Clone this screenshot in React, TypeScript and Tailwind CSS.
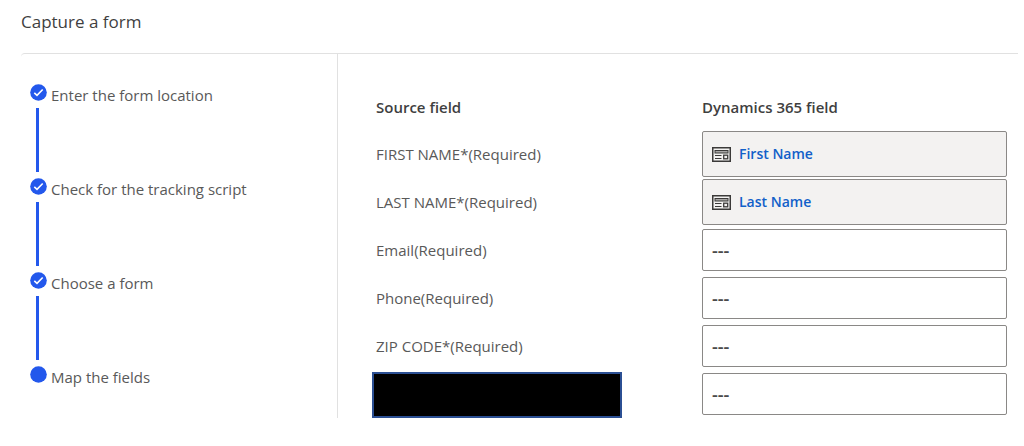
import React, { useState } from "react";

type Step = { label: string; done: boolean };

type FieldRow = {
  id: string;
  source: string | null;
  target: string | null;
};

const steps: Step[] = [
  { label: "Enter the form location", done: true },
  { label: "Check for the tracking script", done: true },
  { label: "Choose a form", done: true },
  { label: "Map the fields", done: false },
];

const rows: FieldRow[] = [
  { id: "first-name", source: "FIRST NAME*(Required)", target: "First Name" },
  { id: "last-name", source: "LAST NAME*(Required)", target: "Last Name" },
  { id: "email", source: "Email(Required)", target: null },
  { id: "phone", source: "Phone(Required)", target: null },
  { id: "zip", source: "ZIP CODE*(Required)", target: null },
  { id: "hidden", source: null, target: null },
];

function StepDot({ done }: { done: boolean }) {
  return (
    <svg className="h-[17px] w-[17px] shrink-0" viewBox="0 0 17 17" fill="none" aria-hidden="true">
      <circle cx="8.5" cy="8.5" r="8.3" fill="#2358ec" />
      {done && <path d="M4.3 8.9l2.7 2.5 5.7-5.9" stroke="#fff" strokeWidth="1.6" />}
    </svg>
  );
}

function FieldIcon() {
  return (
    <svg className="h-[15px] w-[19px] shrink-0" viewBox="0 0 19 15" fill="none" stroke="#3b3a39" aria-hidden="true">
      <rect x="0.75" y="0.75" width="17.5" height="13.5" strokeWidth="1.5" />
      <rect x="3" y="3.5" width="13" height="2.5" fill="#a8a7a6" />
      <path d="M3 8.5h6.5M3 11.5h6.5" strokeWidth="1.2" />
      <rect x="11.7" y="8.2" width="4" height="3.6" strokeWidth="1.3" />
    </svg>
  );
}

function Steps() {
  return (
    <ol className="w-[317px] shrink-0 border-r border-[#e1e1e1] pt-[30px] pl-[9px]">
      {steps.map((step, i) => (
        <li key={step.label} className={i < steps.length - 1 ? "h-[94px]" : ""}>
          <div className="flex items-start gap-1">
            <StepDot done={step.done} />
            <span className="text-[15px] leading-[22px] text-[#595959]">{step.label}</span>
          </div>
          {i < steps.length - 1 && <div className="mt-[2px] ml-[6px] h-16 w-[3px] bg-[#2358ec]" />}
        </li>
      ))}
    </ol>
  );
}

function MappingTable() {
  const [values, setValues] = useState<Record<string, string>>({});

  return (
    <table className="w-full table-fixed">
      <thead>
        <tr className="h-[46px] align-top text-left text-[15px] leading-[20px] text-[#3f3f3f]">
          <th className="w-[326px] pt-[13px] font-semibold">Source field</th>
          <th className="pt-[13px] font-semibold">Dynamics 365 field</th>
        </tr>
      </thead>
      <tbody>
        {rows.map((row) => (
          <tr key={row.id} className="h-12">
            <td className={row.source ? "p-0 align-middle" : "p-0 align-bottom"}>
              {row.source ? (
                <label htmlFor={row.id} className="text-[15px] leading-[22px] text-[#595959]">
                  {row.source}
                </label>
              ) : (
                <div className="-ml-1 h-[46px] w-[250px] border-2 border-[#2b4f93] bg-black" />
              )}
            </td>
            <td className="p-0 align-middle">
              {row.target ? (
                <div className="flex h-[46px] items-center gap-2 rounded-[2px] border border-[#8a8886] bg-[#f3f2f1] px-[9px]">
                  <FieldIcon />
                  <a id={row.id} href="#" className="text-sm leading-[20px] font-semibold text-[#1160c9]">
                    {row.target}
                  </a>
                </div>
              ) : (
                <input
                  id={row.id}
                  type="text"
                  aria-label={row.source ?? "Field"}
                  value={values[row.id] ?? "---"}
                  onChange={(e) => setValues({ ...values, [row.id]: e.target.value })}
                  className="block h-[42px] w-full rounded-[2px] border border-[#8a8886] bg-white px-[9px] text-lg font-semibold text-[#4a4a4a]"
                />
              )}
            </td>
          </tr>
        ))}
      </tbody>
    </table>
  );
}

export default function App() {
  return (
    <main className="min-h-dvh bg-white pr-[6px] pl-[21px] font-['Open_Sans','Noto_Sans',sans-serif]">
      <h1 className="pt-[9px] pb-[18px] text-[17px] leading-[26px] text-[#3f3f3f]">Capture a form</h1>
      <div className="flex rounded-tl-[4px] border-t border-[#e1e1e1]">
        <Steps />
        <section className="min-w-0 flex-1 pt-[30px] pr-[11px] pl-[38px]">
          <MappingTable />
        </section>
      </div>
    </main>
  );
}
